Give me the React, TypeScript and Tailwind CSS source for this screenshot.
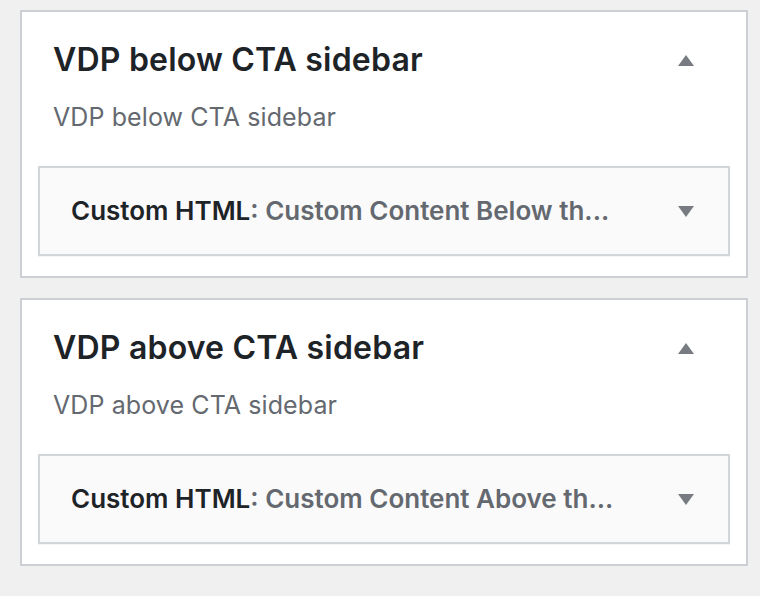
import React from "react";

function Triangle({ up }: { up?: boolean }) {
  return (
    <svg width="16" height="11" viewBox="0 0 16 11" className="shrink-0">
      {up ? (
        <polygon points="8,0 16,11 0,11" fill="#787c82" />
      ) : (
        <polygon points="0,0 16,0 8,11" fill="#787c82" />
      )}
    </svg>
  );
}

function Sidebar({ name, widget }: { name: string; widget: string }) {
  return (
    <div className="ml-[20px] w-[728px] h-[268px] border-2 border-[#ccd0d4] bg-white">
      <div className="flex items-center justify-between pl-[31px] pr-[52px] pt-[28px]">
        <h2 className="text-[32px] leading-[40px] font-semibold text-[#1d2327] tracking-[0.2px]">{name}</h2>
        <Triangle up />
      </div>
      <p className="pl-[31px] mt-[21px] text-[25px] leading-[32px] text-[#646970] tracking-[0.1px]">{name}</p>
      <div className="mx-[16px] mt-[33px] h-[90px] border-2 border-[#d3d6d9] bg-[#fafafa] shadow-[0_1px_1px_rgba(0,0,0,0.04)] flex items-center justify-between pl-[31px] pr-[34px]">
        <div className="text-[26px] leading-[32px] font-semibold">
          <span className="text-[#1d2327]">Custom HTML</span>
          <span className="text-[#646970]">: {widget}</span>
        </div>
        <Triangle />
      </div>
    </div>
  );
}

export default function App() {
  return (
    <div className="w-[760px] h-[596px] bg-[#f0f0f1] pt-[10px] flex flex-col gap-[20px]" style={{ fontFamily: "Inter, 'Noto Sans', sans-serif" }}>
      <Sidebar name="VDP below CTA sidebar" widget="Custom Content Below th..." />
      <Sidebar name="VDP above CTA sidebar" widget="Custom Content Above th..." />
    </div>
  );
}
